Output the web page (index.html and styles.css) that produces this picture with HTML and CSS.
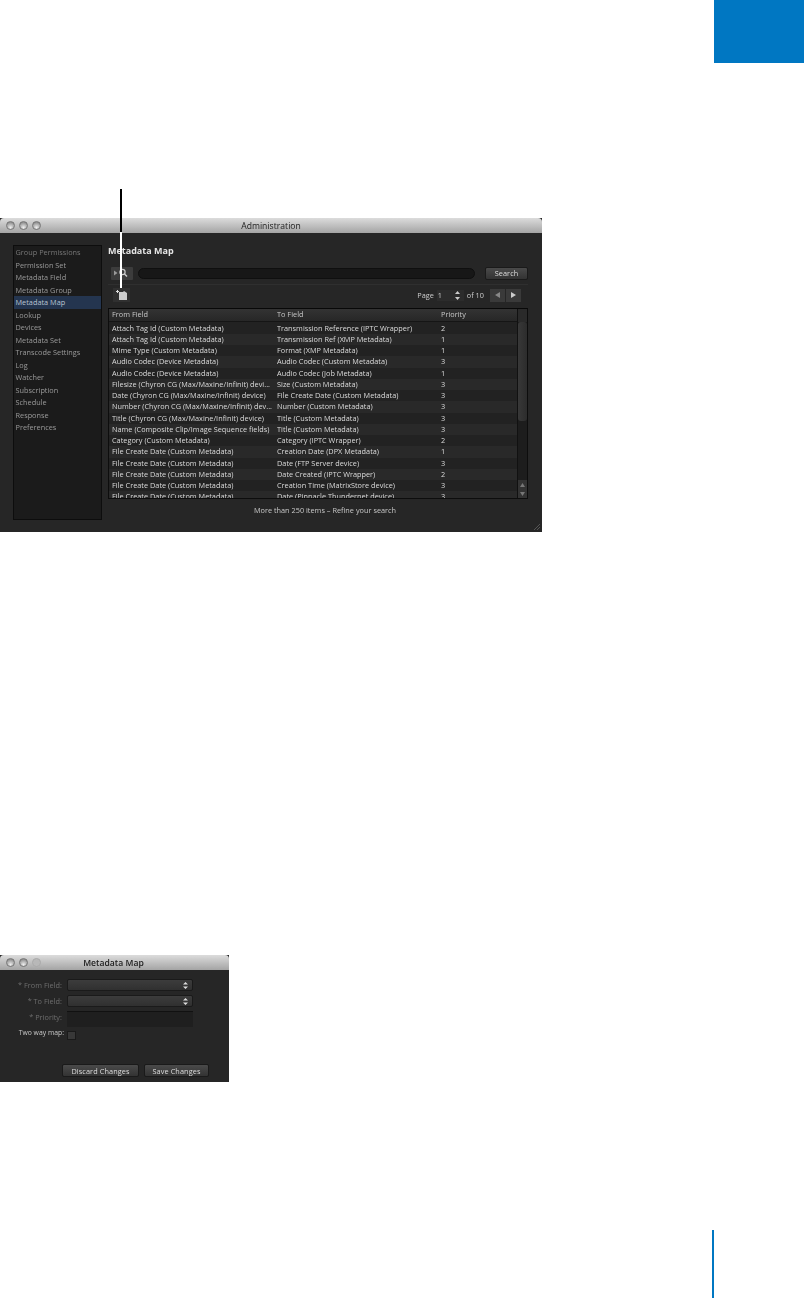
FILE: index.html
```html
<!DOCTYPE html>
<html lang="en">
<head>
<meta charset="utf-8">
<title>Metadata Map</title>
<link rel="stylesheet" href="styles.css">
</head>
<body>
<div class="tab"></div>

<section class="window admin">
  <div class="titlebar">
    <div class="lights"><i></i><i></i><i></i></div>
    <span>Administration</span>
  </div>
  <div class="admin-body">
    <nav class="sidebar">
      <a class="dim">Group Permissions</a>
      <a>Permission Set</a>
      <a>Metadata Field</a>
      <a>Metadata Group</a>
      <a class="selected">Metadata Map</a>
      <a>Lookup</a>
      <a>Devices</a>
      <a>Metadata Set</a>
      <a>Transcode Settings</a>
      <a>Log</a>
      <a>Watcher</a>
      <a>Subscription</a>
      <a>Schedule</a>
      <a>Response</a>
      <a>Preferences</a>
    </nav>
    <main class="content">
      <h1>Metadata Map</h1>
      <div class="search-row">
        <div class="search-btn">
          <svg width="20" height="12" viewBox="0 0 20 12"><path d="M3 3.500 6.500 6 3 8.500z" fill="#999"/><circle cx="11.500" cy="5" r="2.600" fill="none" stroke="#ccc" stroke-width="1.200"/><path d="M13.500 7 16 9.500" stroke="#ccc" stroke-width="1.400"/></svg>
        </div>
        <div class="search-input"></div>
        <div class="btn search-go">Search</div>
      </div>
      <div class="pager-row">
        <div class="add-btn">
          <svg width="11" height="10" viewBox="0 0 11 10"><path d="M3 2h4l1-1 3 2v7H3z" fill="#cfcfcf"/><path d="M0 1.500h3M1.500 0v3" stroke="#ddd" stroke-width="1"/></svg>
        </div>
        <div class="pager">
          <span>Page</span>
          <div class="page-num"><span>1</span><svg width="5" height="9" viewBox="0 0 5 9"><path d="M2.500 0 5 3H0zM2.500 9 0 6h5z" fill="#ccc"/></svg></div>
          <span>of 10</span>
          <div class="arrows">
            <div><svg width="5" height="6" viewBox="0 0 5 6"><path d="M5 0v6L0 3z" fill="#888"/></svg></div>
            <div><svg width="5" height="6" viewBox="0 0 5 6"><path d="M0 0v6l5-3z" fill="#ccc"/></svg></div>
          </div>
        </div>
      </div>
      <div class="table">
        <div class="table-main">
          <div class="row head"><span>From Field</span><span>To Field</span><span>Priority</span></div>
          <div class="rows">
            <div class="row"><span>Attach Tag Id (Custom Metadata)</span><span>Transmission Reference (IPTC Wrapper)</span><span>2</span></div>
            <div class="row"><span>Attach Tag Id (Custom Metadata)</span><span>Transmission Ref (XMP Metadata)</span><span>1</span></div>
            <div class="row"><span>Mime Type (Custom Metadata)</span><span>Format (XMP Metadata)</span><span>1</span></div>
            <div class="row"><span>Audio Codec (Device Metadata)</span><span>Audio Codec (Custom Metadata)</span><span>3</span></div>
            <div class="row"><span>Audio Codec (Device Metadata)</span><span>Audio Codec (Job Metadata)</span><span>1</span></div>
            <div class="row"><span>Filesize (Chyron CG (Max/Maxine/Infinit) devi...</span><span>Size (Custom Metadata)</span><span>3</span></div>
            <div class="row"><span>Date (Chyron CG (Max/Maxine/Infinit) device)</span><span>File Create Date (Custom Metadata)</span><span>3</span></div>
            <div class="row"><span>Number (Chyron CG (Max/Maxine/Infinit) dev...</span><span>Number (Custom Metadata)</span><span>3</span></div>
            <div class="row"><span>Title (Chyron CG (Max/Maxine/Infinit) device)</span><span>Title (Custom Metadata)</span><span>3</span></div>
            <div class="row"><span>Name (Composite Clip/Image Sequence fields)</span><span>Title (Custom Metadata)</span><span>3</span></div>
            <div class="row"><span>Category (Custom Metadata)</span><span>Category (IPTC Wrapper)</span><span>2</span></div>
            <div class="row"><span>File Create Date (Custom Metadata)</span><span>Creation Date (DPX Metadata)</span><span>1</span></div>
            <div class="row"><span>File Create Date (Custom Metadata)</span><span>Date (FTP Server device)</span><span>3</span></div>
            <div class="row"><span>File Create Date (Custom Metadata)</span><span>Date Created (IPTC Wrapper)</span><span>2</span></div>
            <div class="row"><span>File Create Date (Custom Metadata)</span><span>Creation Time (MatrixStore device)</span><span>3</span></div>
            <div class="row"><span>File Create Date (Custom Metadata)</span><span>Date (Pinnacle Thundernet device)</span><span>3</span></div>
          </div>
        </div>
        <div class="scrollbar">
          <div class="scroll-head"></div>
          <div class="thumb"></div>
          <div class="scroll-track"></div>
          <div class="scroll-btn"><svg width="5" height="4" viewBox="0 0 5 4"><path d="M2.500 0 5 4H0z" fill="#777"/></svg></div>
          <div class="scroll-btn"><svg width="5" height="4" viewBox="0 0 5 4"><path d="M0 0h5L2.500 4z" fill="#777"/></svg></div>
        </div>
      </div>
      <p class="status">More than 250 items &#8211; Refine your search</p>
    </main>
  </div>
  <svg class="grip" width="8" height="8" viewBox="0 0 8 8"><path d="M7 1 1 7M7 4 4 7" stroke="#555" stroke-width="1"/></svg>
  <div class="callout"><b></b><u></u></div>
</section>

<section class="window dialog">
  <div class="titlebar">
    <div class="lights"><i></i><i></i><i class="off"></i></div>
    <span>Metadata Map</span>
  </div>
  <div class="form">
    <label class="req">* From Field:</label>
    <div class="select"><svg width="5" height="9" viewBox="0 0 5 9"><path d="M2.500 1 5 3.600H0zM2.500 8 0 5.400h5z" fill="#ddd"/></svg></div>
    <label class="req">* To Field:</label>
    <div class="select"><svg width="5" height="9" viewBox="0 0 5 9"><path d="M2.500 1 5 3.600H0zM2.500 8 0 5.400h5z" fill="#ddd"/></svg></div>
    <label class="req">* Priority:</label>
    <div class="input"></div>
    <label class="two">Two way map:</label>
    <div class="check"></div>
  </div>
  <div class="actions">
    <div class="btn discard">Discard Changes</div>
    <div class="btn save">Save Changes</div>
  </div>
</section>

<div class="folio"></div>
</body>
</html>
```

FILE: styles.css
```css
* { box-sizing: border-box; }
html, body { margin: 0; padding: 0; background: #fff; }
body {
  position: relative;
  width: 804px;
  height: 1298px;
  overflow: hidden;
  font-family: "Open Sans", "DejaVu Sans", sans-serif;
}

.tab {
  width: 90px;
  height: 63px;
  margin-left: 714px;
  background: #0077c2;
}

.window {
  position: relative;
  background: #262626;
  color: #ddd;
  font-size: 7.3px;
  letter-spacing: 0.02px;
  filter: blur(0.4px);
}
.admin { width: 542px; height: 314px; margin-top: 155px; }
.dialog { width: 229px; height: 127px; margin-top: 423px; }

/* Neutral text: the reference's antialiasing has no colour fringes. */
.titlebar span, h1, .btn, .pager, .table, .status, .form label,
.sidebar a:not(.selected) { filter: grayscale(1); }

.titlebar {
  position: relative;
  height: 15px;
  display: flex;
  align-items: center;
  justify-content: center;
  background: linear-gradient(#dcdcdc, #a4a4a4);
  border-radius: 4px 4px 0 0;
  color: #1c1c1c;
  font-size: 8.6px;
}
.dialog .titlebar span { font-weight: 600; margin-left: -2px; }
.lights {
  position: absolute;
  left: 6px;
  top: 3px;
  display: flex;
  gap: 4px;
}
.lights i {
  width: 9px;
  height: 9px;
  border-radius: 50%;
  background: radial-gradient(circle at 50% 80%, #eee, #888 85%);
  border: 1px solid #777;
}
.lights i.off { background: #b8b8b8; border-color: #aaa; }

.admin-body {
  display: flex;
  gap: 6px;
  padding: 12px 14px 0 13px;
}
.sidebar {
  width: 89px;
  height: 275px;
  display: flex;
  flex-direction: column;
  background: #1b1b1b;
  border: 1px solid #0d0d0d;
  color: #9a9a9a;
}
.sidebar a {
  display: block;
  height: 12.500px;
  line-height: 12.500px;
  padding-left: 1.500px;
  white-space: nowrap;
  overflow: hidden;
}
.sidebar .dim { color: #777; }
.sidebar .selected { background: #24354f; color: #b9c4d2; }

.content { flex: 1; min-width: 0; }
h1 {
  margin: 0;
  height: 21px;
  line-height: 11px;
  font-size: 9px;
  font-weight: 700;
  letter-spacing: 0;
  color: #e4e4e4;
}
.search-row {
  display: flex;
  align-items: center;
  height: 14px;
  padding-left: 3px;
}
.search-btn {
  width: 22px;
  height: 13px;
  background: #3c3c3c;
  border-radius: 1px;
  display: flex;
  align-items: center;
}
.search-input {
  width: 337px;
  height: 11px;
  margin-left: 5px;
  background: #171717;
  border-radius: 6px;
  border: 1px solid #0f0f0f;
}
.btn {
  display: flex;
  align-items: center;
  justify-content: center;
  height: 13px;
  letter-spacing: 0.1px;
  background: linear-gradient(#4a4a4a, #333);
  border: 1px solid #1a1a1a;
  border-radius: 2px;
  color: #ddd;
}
.search-go { width: 43px; margin-left: 10px; }

.pager-row {
  display: flex;
  align-items: center;
  justify-content: space-between;
  height: 21px;
  margin-top: 4px;
  padding: 0 7px 0 5px;
  border-top: 1px solid #2f2f2f;
}
.add-btn {
  width: 17px;
  height: 14px;
  background: #303030;
  display: flex;
  align-items: center;
  justify-content: center;
}
.pager { display: flex; align-items: center; gap: 3px; color: #ccc; }
.page-num {
  width: 27px;
  height: 11px;
  display: flex;
  align-items: center;
  justify-content: space-between;
  padding: 0 4px 0 1px;
  background: #2c2c2c;
}
.arrows { display: flex; gap: 1px; margin-left: 3px; }
.arrows div {
  width: 15px;
  height: 13px;
  background: #3a3a3a;
  display: flex;
  align-items: center;
  justify-content: center;
}

.table {
  display: flex;
  height: 191px;
  margin-top: 3px;
  background: #222;
  border: 1px solid #0d0d0d;
  border-top-color: #080808;
  overflow: hidden;
}
.table-main { width: 409px; }
.row {
  display: grid;
  grid-template-columns: 165px 164px 1fr;
  height: 11.250px;
  line-height: 11.250px;
  padding-left: 3px;
  white-space: nowrap;
  color: #dcdcdc;
}
.row:nth-child(even) { background: #292929; }
.row span { overflow: hidden; }
.row.head {
  height: 13px;
  line-height: 11px;
  background: linear-gradient(#333, #272727);
  color: #c8c8c8;
  border-bottom: 1px solid #151515;
  margin-bottom: 0.500px;
}
.rows { height: 178px; overflow: hidden; }

.scrollbar {
  width: 10px;
  display: flex;
  flex-direction: column;
  background: #1d1d1d;
  border-left: 1px solid #111;
}
.scroll-head { height: 13px; background: #2a2a2a; flex: none; }
.thumb {
  height: 99px;
  flex: none;
  background: linear-gradient(90deg, #383838, #2c2c2c);
  border-radius: 3px;
}
.scroll-track { flex: 1; }
.scroll-btn {
  height: 9px;
  background: #333;
  display: flex;
  align-items: center;
  justify-content: center;
}

.status {
  margin: 5px 0 0;
  padding-left: 14px;
  text-align: center;
  line-height: 12px;
  color: #c8c8c8;
}

.grip { position: absolute; right: 1px; bottom: 1px; }

.callout { position: absolute; left: 120px; top: -29px; width: 2px; }
.callout b { display: block; width: 2px; height: 43px; background: #000; }
.callout u { display: block; width: 1.500px; height: 56px; background: #fff; }

.form {
  display: grid;
  grid-template-columns: 62px 126px;
  grid-template-rows: 12px 12px 16px 9px;
  row-gap: 4px;
  column-gap: 5px;
  padding-top: 9px;
}
.form label { text-align: right; line-height: 12px; white-space: nowrap; }
.form .req { color: #6d6d6d; }
.form .two { color: #c8c8c8; margin-right: -2px; line-height: 4px; font-size: 6.800px; }
.select {
  display: flex;
  align-items: center;
  justify-content: flex-end;
  padding-right: 4px;
  background: linear-gradient(#3c3c3c, #303030);
  border: 1px solid #1a1a1a;
  border-radius: 2px;
}
.input { background: #1f1f1f; border-top: 1px solid #111; }
.check {
  width: 9px;
  height: 9px;
  background: #383838;
  border: 1px solid #1a1a1a;
}
.actions {
  display: flex;
  gap: 5px;
  margin-top: 24px;
  padding-left: 62px;
}
.discard { width: 77px; }
.save { width: 65px; }

.folio {
  position: absolute;
  left: 712px;
  top: 1230px;
  width: 1.500px;
  height: 68px;
  background: #0077c2;
}
```
